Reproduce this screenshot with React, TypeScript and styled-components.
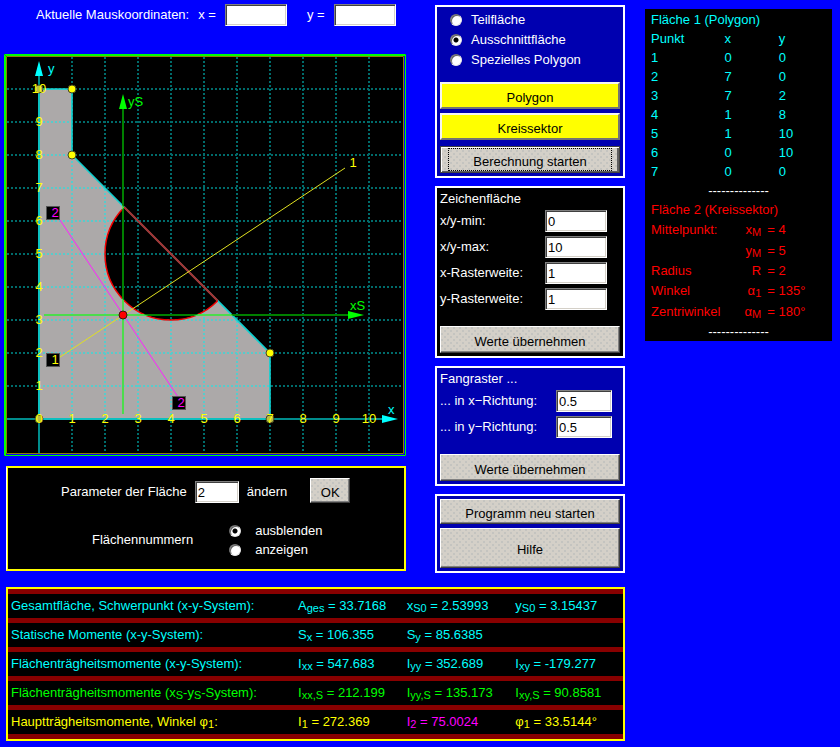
import React, { useState } from "react";
import styled, { createGlobalStyle, css } from "styled-components";

const GlobalStyle = createGlobalStyle`
  * { box-sizing: border-box; }
  body {
    margin: 0;
    background: #0000ff;
    color: #fff;
    font-family: "Liberation Sans", Arial, sans-serif;
    font-size: 13px;
    line-height: 16px;
  }
`;

/* ---------- page layout ---------- */

const Page = styled.main`
  display: grid;
  grid-template-columns: 621fr 187fr;
  align-items: start;
  gap: 20px;
  padding: 4px 8px 6px 4px;
`;

const Workspace = styled.div`
  display: grid;
  gap: 14px;
`;

const Columns = styled.div`
  display: grid;
  grid-template-columns: 402fr 190fr;
  align-items: start;
  gap: 29px;
`;

const DrawingColumn = styled.div`
  display: flex;
  flex-direction: column;
`;

const ControlColumn = styled.div`
  display: flex;
  flex-direction: column;
  gap: 8px;
  padding-top: 1px;
`;

/* ---------- shared controls ---------- */

const TextInput = styled.input<{ $width: number }>`
  flex: none;
  width: ${(p) => p.$width}px;
  height: 22px;
  padding: 1px 0 0 2px;
  border: 1px solid;
  border-color: #808080 #fff #fff #808080;
  box-shadow: inset 1px 1px #404040, inset -1px -1px #d4d0c8;
  border-radius: 0;
  background: #fff;
  color: #000;
  font: 13px "Liberation Sans", Arial, sans-serif;
  outline: none;
`;

const Button = styled.button<{ $height?: number; $tone?: "grey" | "yellow"; $active?: boolean }>`
  display: block;
  height: ${(p) => p.$height ?? 27}px;
  padding: 3px 8px 0;
  border: 1px solid;
  border-color: #fff #404040 #404040 #fff;
  border-radius: 0;
  box-shadow: inset -1px -1px #808080;
  color: #000;
  background-color: #d4d0c8;
  background-image:
    radial-gradient(circle at 1px 1px, #c4c4c0 1px, transparent 1px),
    radial-gradient(circle at 4px 4px, #c4c4c0 1px, transparent 1px);
  background-size: 6px 6px;
  font: 13px "Liberation Sans", Arial, sans-serif;
  ${(p) =>
    p.$tone === "yellow" &&
    css`
      background: #ffff00;
      border: 2px solid;
      border-color: #f4f4f4 #747474 #747474 #f4f4f4;
      box-shadow: none;
    `}
  ${(p) =>
    p.$active &&
    css`
      border-color: #404040;
      box-shadow: inset 1px 1px #fff, inset -2px -1px #606060;
      padding: 0 7px;
    `}
`;

const FocusFrame = styled.span`
  display: block;
  height: 23px;
  padding-top: 2px;
  border: 1px dotted #000;
  line-height: 22px;
`;

const Radio = styled.input.attrs({ type: "radio" })`
  appearance: none;
  flex: none;
  width: 12px;
  height: 12px;
  margin: 0;
  border: 1px solid;
  border-color: #6e6e6e #e8e8e8 #e8e8e8 #6e6e6e;
  border-radius: 50%;
  background: #fff;
  box-shadow: inset 1px 1px #606060;
  &:checked {
    background: radial-gradient(circle, #000 2px, #fff 3px);
  }
`;

const Sub = styled.sub`
  font-size: 11px;
  line-height: 0;
  vertical-align: -2px;
`;

/* ---------- mouse coordinates ---------- */

const MouseBar = styled.div`
  display: flex;
  align-items: center;
  margin: 0 0 28px 32px;
  white-space: nowrap;
`;

const MouseTitle = styled.span`
  margin-right: 9px;
`;

const MouseField = styled.label`
  display: flex;
  align-items: center;
  gap: 9px;
  & + & { margin-left: 20px; }
`;

/* ---------- drawing ---------- */

const Plot = styled.svg`
  display: block;
  width: 100%;
  background: #000;
  font-family: "Liberation Sans", Arial, sans-serif;
  font-size: 13px;
`;

const X0 = 39;
const Y0 = 419;
const UNIT = 33;
const px = (x: number) => X0 + x * UNIT;
const py = (y: number) => Y0 - y * UNIT;
const steps = [1, 2, 3, 4, 5, 6, 7, 8, 9, 10];
const vertices = [[0, 0], [7, 0], [7, 2], [1, 8], [1, 10], [0, 10]];
const corners = vertices.map(([x, y]) => `${px(x)},${py(y)}`);
const cutStart = [px(4 - Math.SQRT2), py(5 + Math.SQRT2)];
const cutEnd = [px(4 + Math.SQRT2), py(5 - Math.SQRT2)];
const arc = `M${cutStart} A66 66 0 0 0 ${cutEnd}`;
const solid = `M${corners.join("L")}Z ${arc}Z`;
const carriesNumber = (x: number, y: number) => y === 0 || x === 0;

function Grid({ color }: { color: string }) {
  return (
    <g stroke={color} strokeWidth="2" strokeDasharray="2 2" shapeRendering="crispEdges">
      {steps.map((n) => (
        <path key={n} d={`M${px(n)} 57V453M7 ${py(n)}H403`} />
      ))}
    </g>
  );
}

function AreaAxes({ color }: { color: string }) {
  return <path d="M123 105V414M44 315H352" stroke={color} strokeWidth="2" />;
}

function EndLabel({ x, y, color, text }: { x: number; y: number; color: string; text: string }) {
  return (
    <>
      <rect x={x - 6.5} y={y - 6.5} width="13" height="13" fill="#000" stroke="#555" />
      <text x={x + 2} y={y + 4} fill={color} textAnchor="middle">{text}</text>
    </>
  );
}

function Drawing() {
  return (
    <Plot viewBox="4 54 402 402" role="img" aria-label="Zeichenfläche">
      <defs>
        <clipPath id="solid">
          <path clipRule="evenodd" d={solid} />
        </clipPath>
      </defs>
      <Grid color="#006c6c" />
      <path d={solid} fillRule="evenodd" fill="#aca9a9" />
      <g clipPath="url(#solid)">
        <Grid color="#58cccc" />
      </g>
      <path d="M39 70V453M6 419H390" stroke="#008c8c" strokeWidth="2" />
      <polygon points={corners.join(" ")} fill="none" stroke="#10d0d0" strokeWidth="1.6" />
      <path d={`M${cutStart}L${cutEnd}`} stroke="#a83030" strokeWidth="2" />
      <path d={arc} fill="none" stroke="#f00000" strokeWidth="1.5" />
      <g fill="#00ffff">
        <polygon points="39,61 35,76 43,76" />
        <polygon points="398,419 382,415 382,423" />
        <text x="48" y="73">y</text>
        <text x="388" y="414">x</text>
      </g>
      <AreaAxes color="#008000" />
      <g clipPath="url(#solid)">
        <AreaAxes color="#4cdc4c" />
      </g>
      <g fill="#00ff00">
        <polygon points="123,94 119,109 127,109" />
        <polygon points="364,315 348,311 348,319" />
        <text x="128" y="106">yS</text>
        <text x="350" y="310">xS</text>
      </g>
      <path d="M60 357L345 168" stroke="#e0e020" />
      <path d="M60 220L178 397" stroke="#ff20ff" />
      <circle cx="123" cy="315" r="4" fill="#f00" stroke="#401010" />
      {vertices.map(([x, y]) => (
        <circle
          key={`${x}-${y}`}
          cx={px(x)}
          cy={py(y)}
          r="4"
          fill={carriesNumber(x, y) ? "#b8c040" : "#ff0"}
          stroke="#444420"
        />
      ))}
      <g fill="#ffff00" textAnchor="middle">
        <text x="39" y="423">0</text>
        {steps.map((n) => (
          <React.Fragment key={n}>
            <text x={px(n)} y="423">{n}</text>
            <text x="39" y={py(n) + 4}>{n}</text>
          </React.Fragment>
        ))}
        <text x="353" y="167">1</text>
      </g>
      <EndLabel x={53} y={213} color="#f0f" text="2" />
      <EndLabel x={53} y={360} color="#ff0" text="1" />
      <EndLabel x={179} y={403} color="#f0f" text="2" />
      <g fill="none">
        <path d="M404.5 56V454.5H6" stroke="#0000ff" />
        <path d="M6.5 56.5H403.5V453.5H6.5Z" stroke="#8c8000" />
        <path d="M405.5 455.5V54.5H4.5V455.5ZM5.5 455V55.5H405" stroke="#00ff00" />
      </g>
    </Plot>
  );
}

/* ---------- parameters ---------- */

const ParameterPanel = styled.section`
  display: grid;
  gap: 18px;
  margin: 10px 0 0 2px;
  padding: 10px 12px 10px 54px;
  border: 2px solid #ffff00;
  border-left: 1px solid #fff;
  box-shadow: inset 1px 0 #ffff00;
  background: #000;
`;

const ParameterRow = styled.div`
  display: flex;
  align-items: end;
`;

const ParameterLabel = styled.label`
  display: flex;
  align-items: center;
  gap: 8px;
`;

const OkButton = styled(Button)`
  width: 40px;
  margin-left: 23px;
  padding: 3px 0 0;
`;

const NumberRow = styled.div`
  display: flex;
  align-items: center;
  gap: 36px;
  padding-left: 31px;
`;

const RadioList = styled.div<{ $pitch: number }>`
  display: grid;
  grid-auto-rows: ${(p) => p.$pitch}px;
`;

const RadioLabel = styled.label<{ $gap: number }>`
  display: flex;
  align-items: center;
  gap: ${(p) => p.$gap}px;
`;

/* ---------- control panels ---------- */

const Panel = styled.section<{ $dark?: boolean }>`
  display: flex;
  flex-direction: column;
  gap: 4px;
  padding: 3px;
  border: 2px solid #fff;
  background: ${(p) => (p.$dark ? "#000" : "#0000b0")};
`;

const ModeList = styled(RadioList)`
  padding: 0 0 8px 10px;
`;

const PanelTitle = styled.h2`
  height: 15px;
  margin: 0;
  font-size: 13px;
  font-weight: normal;
  line-height: 15px;
`;

const Field = styled.label<{ $inset: number }>`
  display: flex;
  align-items: center;
  justify-content: space-between;
  padding-right: ${(p) => p.$inset}px;
`;

const Footer = styled.div<{ $space: number }>`
  display: grid;
  padding-top: ${(p) => p.$space}px;
`;

/* ---------- area listing ---------- */

const Listing = styled.aside`
  margin-top: 5px;
  padding: 1px 6px 0;
  background: #000;
`;

const PointTable = styled.table`
  width: 100%;
  table-layout: fixed;
  border-collapse: collapse;
  color: #00ffff;
  caption, th, td {
    height: 19px;
    padding: 0;
    text-align: left;
    font-weight: normal;
    line-height: 19px;
    white-space: nowrap;
  }
  th:first-child { width: 42%; }
  th:nth-child(2) { width: 31%; }
`;

const SectorTable = styled.table`
  width: 100%;
  table-layout: fixed;
  border-collapse: collapse;
  color: #ff0000;
  caption {
    height: 19px;
    text-align: left;
    line-height: 19px;
  }
  th, td {
    padding: 0;
    font-weight: normal;
    white-space: nowrap;
  }
  th { width: 42%; text-align: left; }
  td { width: 21%; text-align: right; }
  td:last-child { width: 37%; padding-left: 6px; text-align: left; }
`;

const SectorRow = styled.tr<{ $height: number }>`
  height: ${(p) => p.$height}px;
`;

const Divider = styled.div`
  height: 19px;
  line-height: 19px;
  text-align: center;
`;

/* ---------- results ---------- */

const Results = styled.table`
  width: calc(100% - 2px);
  margin-left: 2px;
  table-layout: fixed;
  border-collapse: separate;
  border-spacing: 0 5px;
  border: 2px solid #ffff00;
  background: #880000;
  th, td {
    height: 24px;
    padding: 0 0 0 1px;
    background: #000;
    text-align: left;
    font-weight: normal;
    line-height: 20px;
    white-space: nowrap;
  }
  th { width: 47%; padding-left: 3px; }
`;

const Value = styled.td<{ $color: string }>`
  color: ${(p) => p.$color};
`;

const RowTitle = styled.th<{ $color: string }>`
  color: ${(p) => p.$color};
`;

/* ---------- data ---------- */

const points = [[0, 0], [7, 0], [7, 2], [1, 8], [1, 10], [0, 10], [0, 0]];

const sector = [
  { title: "Mittelpunkt:", symbol: "x", sub: "M", value: "4", height: 21 },
  { title: "", symbol: "y", sub: "M", value: "5", height: 21 },
  { title: "Radius", symbol: "R", sub: "", value: "2", height: 19 },
  { title: "Winkel", symbol: "α", sub: "1", value: "135°", height: 21 },
  { title: "Zentriwinkel", symbol: "α", sub: "M", value: "180°", height: 21 },
];

type Cell = { symbol: string; sub: string; value: string; color?: string };

const results: { color: string; title: React.ReactNode; cells: (Cell | null)[] }[] = [
  {
    color: "#00ffff",
    title: "Gesamtfläche, Schwerpunkt (x-y-System):",
    cells: [
      { symbol: "A", sub: "ges", value: "33.7168" },
      { symbol: "x", sub: "S0", value: "2.53993" },
      { symbol: "y", sub: "S0", value: "3.15437" },
    ],
  },
  {
    color: "#00ffff",
    title: "Statische Momente (x-y-System):",
    cells: [
      { symbol: "S", sub: "x", value: "106.355" },
      { symbol: "S", sub: "y", value: "85.6385" },
      null,
    ],
  },
  {
    color: "#00ffff",
    title: "Flächenträgheitsmomente (x-y-System):",
    cells: [
      { symbol: "I", sub: "xx", value: "547.683" },
      { symbol: "I", sub: "yy", value: "352.689" },
      { symbol: "I", sub: "xy", value: "-179.277" },
    ],
  },
  {
    color: "#00ff00",
    title: <>Flächenträgheitsmomente (x<Sub>S</Sub>-y<Sub>S</Sub>-System):</>,
    cells: [
      { symbol: "I", sub: "xx,S", value: "212.199" },
      { symbol: "I", sub: "yy,S", value: "135.173" },
      { symbol: "I", sub: "xy,S", value: "90.8581" },
    ],
  },
  {
    color: "#ffff00",
    title: <>Hauptträgheitsmomente, Winkel φ<Sub>1</Sub>:</>,
    cells: [
      { symbol: "I", sub: "1", value: "272.369" },
      { symbol: "I", sub: "2", value: "75.0024", color: "#ff00ff" },
      { symbol: "φ", sub: "1", value: "33.5144°" },
    ],
  },
];

const modes = ["Teilfläche", "Ausschnittfläche", "Spezielles Polygon"];
const visibility = ["ausblenden", "anzeigen"];
const canvasFields = [
  ["x/y-min:", "0"],
  ["x/y-max:", "10"],
  ["x-Rasterweite:", "1"],
  ["y-Rasterweite:", "1"],
];
const snapFields = [
  ["... in x−Richtung:", "0.5"],
  ["... in y−Richtung:", "0.5"],
];

export default function App() {
  const [mode, setMode] = useState(modes[1]);
  const [numbers, setNumbers] = useState(visibility[0]);

  return (
    <>
      <GlobalStyle />
      <Page>
        <Workspace>
          <Columns>
            <DrawingColumn>
              <MouseBar>
                <MouseTitle>Aktuelle Mauskoordinaten:</MouseTitle>
                <MouseField>x = <TextInput $width={62} /></MouseField>
                <MouseField>y = <TextInput $width={62} /></MouseField>
              </MouseBar>
              <Drawing />
              <ParameterPanel>
                <ParameterRow>
                  <ParameterLabel>
                    Parameter der Fläche
                    <TextInput $width={44} defaultValue="2" />
                    ändern
                  </ParameterLabel>
                  <OkButton type="button" $height={25}>OK</OkButton>
                </ParameterRow>
                <NumberRow role="radiogroup" aria-labelledby="numbers-title">
                  <span id="numbers-title">Flächennummern</span>
                  <RadioList $pitch={19}>
                    {visibility.map((name) => (
                      <RadioLabel key={name} $gap={14}>
                        <Radio name="numbers" checked={numbers === name} onChange={() => setNumbers(name)} />
                        {name}
                      </RadioLabel>
                    ))}
                  </RadioList>
                </NumberRow>
              </ParameterPanel>
            </DrawingColumn>

            <ControlColumn>
              <Panel>
                <ModeList $pitch={20}>
                  {modes.map((name) => (
                    <RadioLabel key={name} $gap={9}>
                      <Radio name="mode" checked={mode === name} onChange={() => setMode(name)} />
                      {name}
                    </RadioLabel>
                  ))}
                </ModeList>
                <Button type="button" $tone="yellow">Polygon</Button>
                <Button type="button" $tone="yellow">Kreissektor</Button>
                <Footer $space={2}>
                  <Button type="button" $active><FocusFrame>Berechnung starten</FocusFrame></Button>
                </Footer>
              </Panel>
              <Panel $dark>
                <PanelTitle>Zeichenfläche</PanelTitle>
                {canvasFields.map(([name, value]) => (
                  <Field key={name} $inset={13}>{name}<TextInput $width={62} defaultValue={value} /></Field>
                ))}
                <Footer $space={12}>
                  <Button type="button">Werte übernehmen</Button>
                </Footer>
              </Panel>
              <Panel>
                <PanelTitle>Fangraster ...</PanelTitle>
                {snapFields.map(([name, value]) => (
                  <Field key={name} $inset={8}>{name}<TextInput $width={56} defaultValue={value} /></Field>
                ))}
                <Footer $space={12}>
                  <Button type="button">Werte übernehmen</Button>
                </Footer>
              </Panel>
              <Panel>
                <Button type="button" $height={25}>Programm neu starten</Button>
                <Button type="button" $height={40}>Hilfe</Button>
              </Panel>
            </ControlColumn>
          </Columns>

          <Results>
            <tbody>
              {results.map((row, i) => (
                <tr key={i}>
                  <RowTitle scope="row" $color={row.color}>{row.title}</RowTitle>
                  {row.cells.map((cell, k) => (
                    <Value key={k} $color={cell?.color ?? row.color}>
                      {cell && <>{cell.symbol}<Sub>{cell.sub}</Sub> = {cell.value}</>}
                    </Value>
                  ))}
                </tr>
              ))}
            </tbody>
          </Results>
        </Workspace>

        <Listing>
          <PointTable>
            <caption>Fläche 1 (Polygon)</caption>
            <thead>
              <tr><th scope="col">Punkt</th><th scope="col">x</th><th scope="col">y</th></tr>
            </thead>
            <tbody>
              {points.map(([x, y], i) => (
                <tr key={i}><td>{i + 1}</td><td>{x}</td><td>{y}</td></tr>
              ))}
            </tbody>
          </PointTable>
          <Divider>--------------</Divider>
          <SectorTable>
            <caption>Fläche 2 (Kreissektor)</caption>
            <tbody>
              {sector.map((row, i) => (
                <SectorRow key={i} $height={row.height}>
                  <th scope="row">{row.title}</th>
                  <td>{row.symbol}{row.sub && <Sub>{row.sub}</Sub>}</td>
                  <td>= {row.value}</td>
                </SectorRow>
              ))}
            </tbody>
          </SectorTable>
          <Divider>--------------</Divider>
        </Listing>
      </Page>
    </>
  );
}
